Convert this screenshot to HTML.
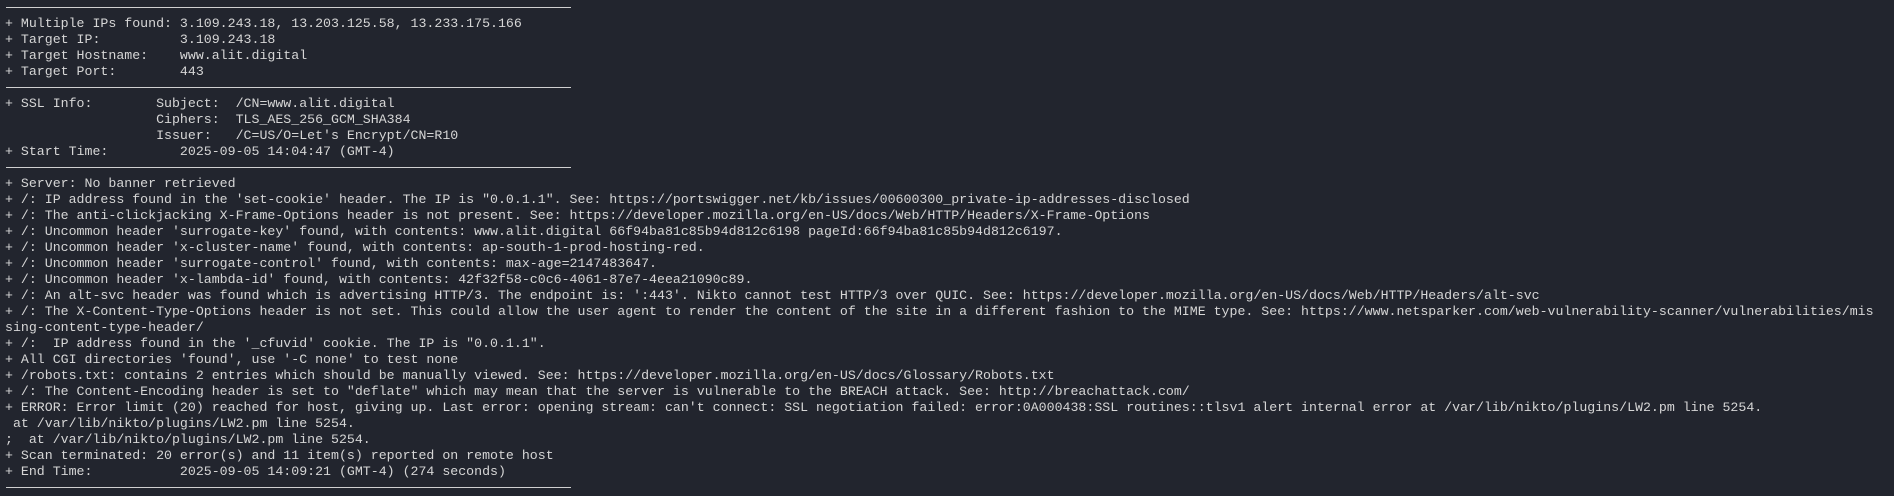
<!DOCTYPE html>
<html><head><meta charset="utf-8"><style>
html,body{margin:0;padding:0;background:#22252e;width:1894px;height:493px;overflow:hidden}
pre{margin:0;position:absolute;left:5px;top:0px;font-family:"Liberation Mono","DejaVu Sans Mono",monospace;font-size:13.25px;line-height:16px;color:#d6d6d6;white-space:pre}
.s{display:inline-block;width:566px;height:16px;position:relative;vertical-align:top}
.s:after{content:"";position:absolute;left:1px;right:0;top:7px;height:1px;background:#d0d0d0}
</style></head><body><pre><span class="s"></span>
+ Multiple IPs found: 3.109.243.18, 13.203.125.58, 13.233.175.166
+ Target IP:          3.109.243.18
+ Target Hostname:    www.alit.digital
+ Target Port:        443
<span class="s"></span>
+ SSL Info:        Subject:  /CN=www.alit.digital
                   Ciphers:  TLS_AES_256_GCM_SHA384
                   Issuer:   /C=US/O=Let's Encrypt/CN=R10
+ Start Time:         2025-09-05 14:04:47 (GMT-4)
<span class="s"></span>
+ Server: No banner retrieved
+ /: IP address found in the 'set-cookie' header. The IP is "0.0.1.1". See: https://portswigger.net/kb/issues/00600300_private-ip-addresses-disclosed
+ /: The anti-clickjacking X-Frame-Options header is not present. See: https://developer.mozilla.org/en-US/docs/Web/HTTP/Headers/X-Frame-Options
+ /: Uncommon header 'surrogate-key' found, with contents: www.alit.digital 66f94ba81c85b94d812c6198 pageId:66f94ba81c85b94d812c6197.
+ /: Uncommon header 'x-cluster-name' found, with contents: ap-south-1-prod-hosting-red.
+ /: Uncommon header 'surrogate-control' found, with contents: max-age=2147483647.
+ /: Uncommon header 'x-lambda-id' found, with contents: 42f32f58-c0c6-4061-87e7-4eea21090c89.
+ /: An alt-svc header was found which is advertising HTTP/3. The endpoint is: ':443'. Nikto cannot test HTTP/3 over QUIC. See: https://developer.mozilla.org/en-US/docs/Web/HTTP/Headers/alt-svc
+ /: The X-Content-Type-Options header is not set. This could allow the user agent to render the content of the site in a different fashion to the MIME type. See: https://www.netsparker.com/web-vulnerability-scanner/vulnerabilities/mis
sing-content-type-header/
+ /:  IP address found in the '_cfuvid' cookie. The IP is "0.0.1.1".
+ All CGI directories 'found', use '-C none' to test none
+ /robots.txt: contains 2 entries which should be manually viewed. See: https://developer.mozilla.org/en-US/docs/Glossary/Robots.txt
+ /: The Content-Encoding header is set to "deflate" which may mean that the server is vulnerable to the BREACH attack. See: http://breachattack.com/
+ ERROR: Error limit (20) reached for host, giving up. Last error: opening stream: can't connect: SSL negotiation failed: error:0A000438:SSL routines::tlsv1 alert internal error at /var/lib/nikto/plugins/LW2.pm line 5254.
 at /var/lib/nikto/plugins/LW2.pm line 5254.
;  at /var/lib/nikto/plugins/LW2.pm line 5254.
+ Scan terminated: 20 error(s) and 11 item(s) reported on remote host
+ End Time:           2025-09-05 14:09:21 (GMT-4) (274 seconds)
<span class="s"></span></pre></body></html>
